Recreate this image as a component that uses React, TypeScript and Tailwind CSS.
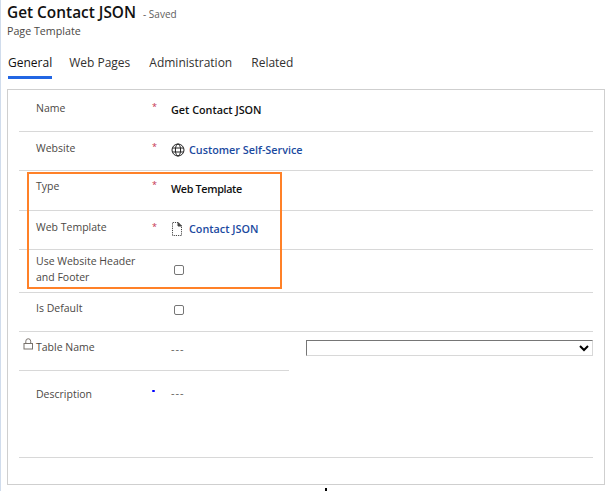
const font = "font-['Open_Sans','Noto_Sans',sans-serif]";

function Row({ label, req, children, h, lock, reqBlue, lineRight = true, labelPt = 'pt-[9px]', starPt = 'pt-[8px]' }: any) {
  return (
    <div className={`flex border-b border-[#d8d8d8] ${h} ${lineRight ? '' : 'w-[270px]'}`}>
      <div className={`w-[17px] shrink-0 ${labelPt} text-[#79736d]`}>{lock}</div>
      <div className={`w-[115px] shrink-0 text-[10.5px] leading-[16px] text-[#4b4845] ${labelPt}`}>{label}</div>
      <div className={`w-[20px] shrink-0 text-[9px] leading-[12px] ${starPt}`}>
        {req && !reqBlue ? <span className="ml-[1px] text-[#c4314b]">*</span> : null}
        {reqBlue ? <div className="ml-[1px] mt-[4px] h-[2px] w-[3px] rounded-full bg-[#0000ff]" /> : null}
      </div>
      <div className="flex-1 min-w-0">{children}</div>
    </div>
  );
}

const Value = ({ children, pt = 'pt-[12px]', cls = '' }: any) => (
  <div className={`${pt} ${cls} text-[10.8px] leading-[16px] font-semibold text-[#111]`}>{children}</div>
);

const Link = ({ icon, text, pt = 'pt-[11px]' }: any) => (
  <div className={`${pt} flex items-center text-[10.8px] leading-[16px] font-semibold text-[#1b4aa0]`}>
    <div className="flex w-[18px] shrink-0 items-center justify-start">{icon}</div>
    <span>{text}</span>
  </div>
);

const Check = ({ pt }: any) => (
  <div className={pt}>
    <div className="ml-[3px] size-[10px] rounded-[2px] border border-[#767676] bg-white" />
  </div>
);

const Globe = () => (
  <svg viewBox="0 0 14 14" className="size-[14px]" fill="none" stroke="#222" strokeWidth="1">
    <circle cx="7" cy="7" r="6" />
    <ellipse cx="7" cy="7" rx="2.6" ry="6" />
    <path d="M1.4 5h11.2M1.4 9h11.2" />
  </svg>
);

const Doc = () => (
  <svg viewBox="0 0 10 14" className="ml-[1px] h-[14px] w-[10px]" fill="none" stroke="#444" strokeWidth="1">
    <path d="M.5 13.5V.5h5.5l3.5 3.5v9.5z" strokeDasharray="1.2 1" />
    <path d="M6 .5V4h3.5z" fill="#444" />
  </svg>
);

const Lock = () => (
  <svg viewBox="0 0 11 12" className="ml-[4px] mt-[-1px] h-[12px] w-[11px]" fill="none" stroke="#79736d" strokeWidth="1">
    <rect x="1" y="5.5" width="8.5" height="5.5" />
    <path d="M2.8 5.5V3.2a2.4 2.4 0 0 1 4.9 0v2.3" />
  </svg>
);

const Dash = ({ pt }: any) => (
  <div className={`${pt} text-[11px] leading-[16px] tracking-[1px] text-[#605e5c]`}>---</div>
);

export default function App() {
  return (
    <div className={`relative h-[491px] w-[612px] overflow-hidden bg-white ${font}`}>
      <div className="flex items-baseline pl-[7px] pt-[3px]">
        <span className="text-[15.4px] leading-[20px] font-semibold text-[#111]">Get Contact JSON</span>
        <span className="ml-[7px] text-[10px] leading-[16px] text-[#605e5c]">- Saved</span>
      </div>
      <div className="pl-[7px] text-[10.7px] leading-[16px] text-[#4b4845]">Page Template</div>

      <div className="mt-[15px] flex h-[34px] pl-[8px] text-[12px] leading-[17px] text-[#323130]">
        <div className="mr-[17px] h-[25px] border-b-[3px] border-[#2266e3] text-[#111]">General</div>
        <div className="mr-[19px]">Web Pages</div>
        <div className="mr-[19px]">Administration</div>
        <div>Related</div>
      </div>

      <div className="ml-[7px] mt-[1px] h-[396px] w-[598px] border border-[#cfcfcf] px-[11px]">
        <Row label="Name" req h="h-[42px]" labelPt="pt-[10px]" starPt="pt-[11px]"><Value>Get Contact JSON</Value></Row>
        <Row label="Website" req h="h-[39px]" labelPt="pt-[8px]" starPt="pt-[9px]"><Link pt="pt-[10px]" icon={<Globe />} text="Customer Self-Service" /></Row>
        <Row label="Type" req h="h-[40px]" labelPt="pt-[7px]" starPt="pt-[8px]"><Value pt="pt-[10px]" cls="tracking-[-0.35px]">Web Template</Value></Row>
        <Row label="Web Template" req h="h-[39px]" labelPt="pt-[8px]" starPt="pt-[10px]"><Link pt="pt-[10px]" icon={<Doc />} text="Contact JSON" /></Row>
        <Row label="Use Website Header and Footer" h="h-[43px]" labelPt="pt-[3px]"><Check pt="pt-[15px]" /></Row>
        <Row label="Is Default" h="h-[39px]" labelPt="pt-[7px]"><Check pt="pt-[12px]" /></Row>
        <div className="relative">
          <Row label="Table Name" lock={<Lock />} h="h-[39px]" lineRight={false} labelPt="pt-[7px]">
            <Dash pt="pt-[9px]" />
          </Row>
          <select aria-label="Table Name" className="absolute left-[287px] top-[8px] h-[16px] w-[287px] border border-t-[#767676] border-l-[#767676] border-r-[#d8d8d8] border-b-[#d8d8d8] bg-white" />
        </div>
        <Row label="Description" req reqBlue h="h-[87px]" labelPt="pt-[15px]" starPt="pt-[15px]">
          <Dash pt="pt-[14px]" />
        </Row>
      </div>
      <div className="absolute left-0 top-0 h-full w-[1px] bg-[#d0dcec]" />

      <div className="absolute left-[27px] top-[172px] h-[117px] w-[255px] border-2 border-[#ff8128]" />
      <div className="absolute left-[325px] top-[488px] h-[3px] w-[2px] bg-black" />
    </div>
  );
}
